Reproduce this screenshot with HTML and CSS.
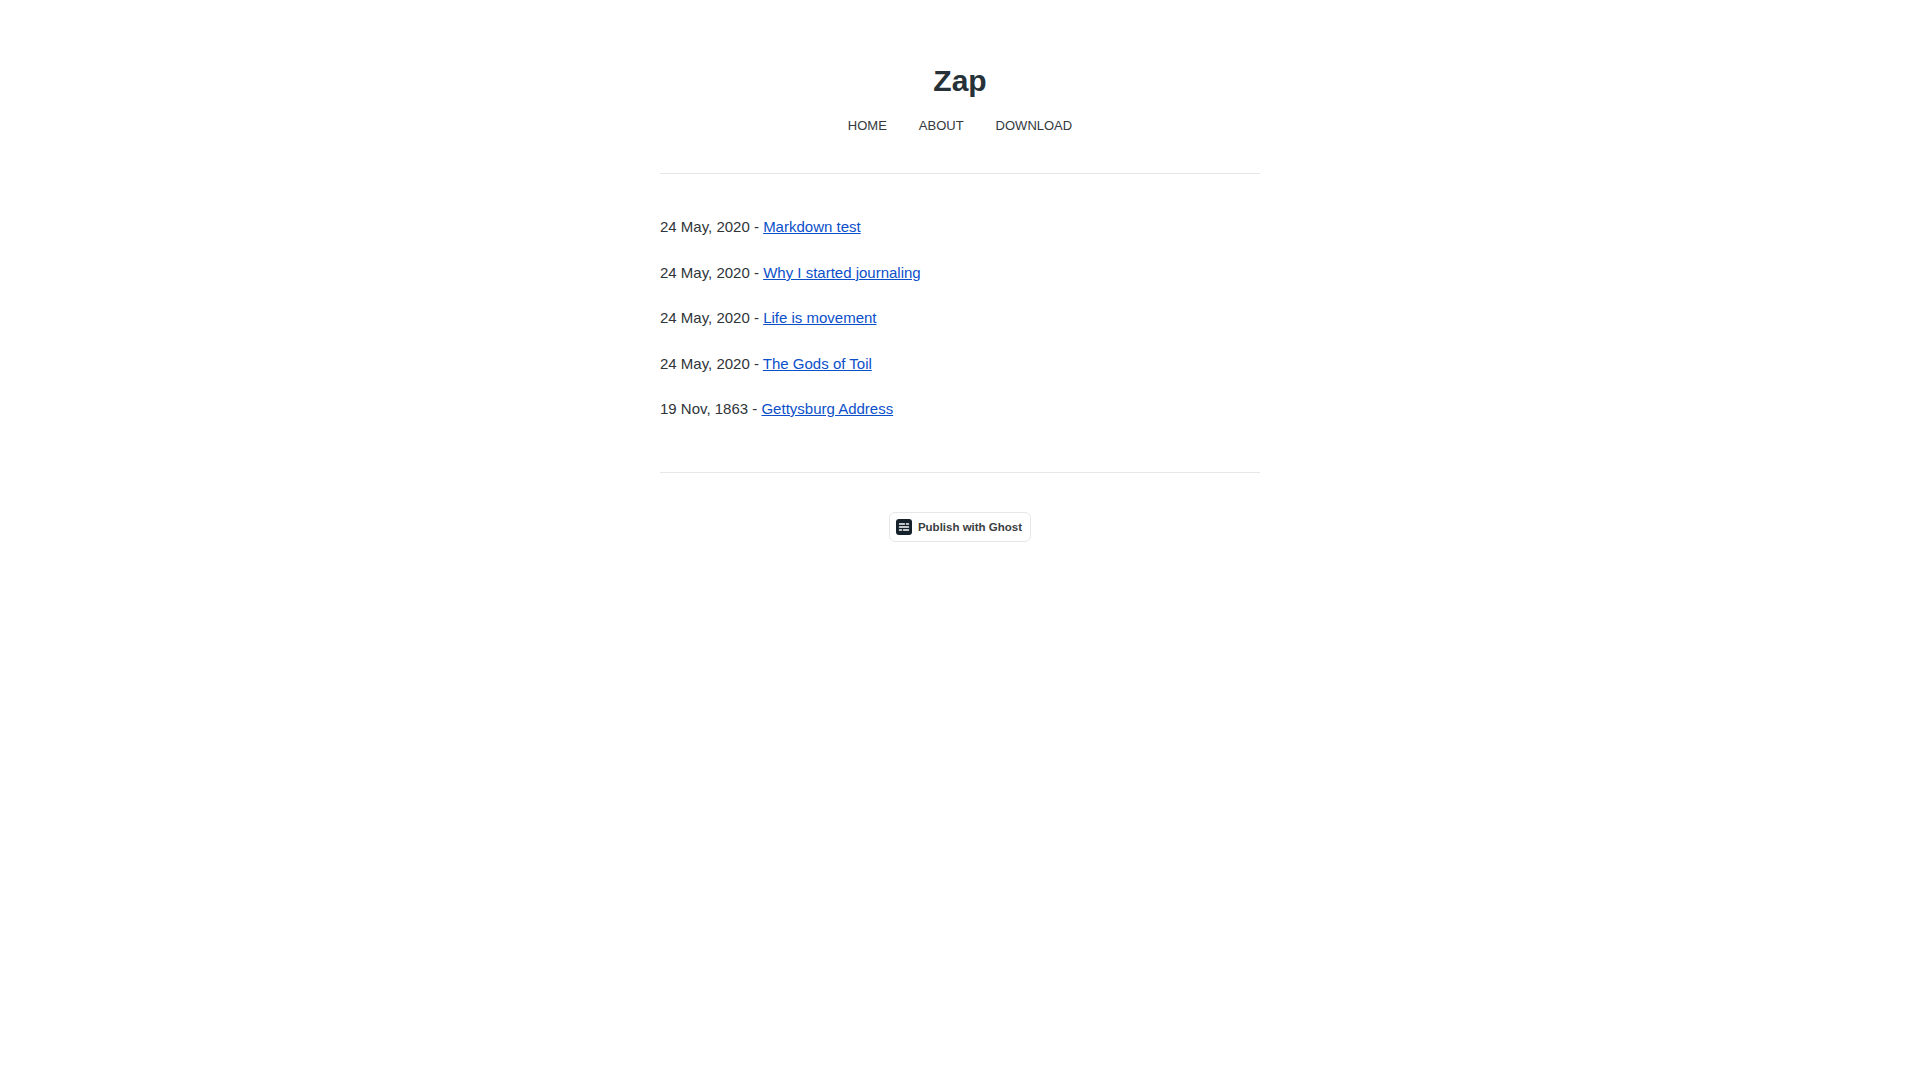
FILE: index.html
```html
<!DOCTYPE html>
<html lang="en">
<head>
    <meta charset="UTF-8">
    <title>Zap</title>
    <link rel="stylesheet" href="styles.css">
</head>
<body>
    <div class="main">
        <header class="site-head">
            <h1 class="site-title">Zap</h1>
            <ul class="site-nav">
                <li><a href="#">HOME</a></li>
                <li><a href="#">ABOUT</a></li>
                <li><a href="#">DOWNLOAD</a></li>
            </ul>
        </header>
        <ul class="post-list">
            <li>24 May, 2020 - <a href="#">Markdown test</a></li>
            <li>24 May, 2020 - <a href="#">Why I started journaling</a></li>
            <li>24 May, 2020 - <a href="#">Life is movement</a></li>
            <li>24 May, 2020 - <a href="#">The Gods of Toil</a></li>
            <li>19 Nov, 1863 - <a href="#">Gettysburg Address</a></li>
        </ul>
        <footer class="site-foot">
            <a class="ghost-badge" href="#">
                <svg class="ghost-icon" viewBox="0 0 16 16">
                    <rect width="16" height="16" rx="3" fill="#15212a"/>
                    <path d="M3.5 5h5M10.5 5h2M3.5 8h9M3.5 11h2M7.5 11h5" stroke="#fff" stroke-width="1.4" stroke-linecap="round" fill="none"/>
                </svg>
                Publish with Ghost
            </a>
        </footer>
    </div>
</body>
</html>
```
FILE: styles.css
```css
*{
    padding:0;
    margin:0;
    box-sizing:border-box;
}
body{
    background:#fff;
    color:#2f3539;
    font-family:"Liberation Sans",Arial,sans-serif;
    font-size:15px;
    line-height:1.5;
}
.main{
    width:600px;
    margin:0 auto;
}
.site-head{
    padding-top:60px;
    padding-bottom:36px;
    text-align:center;
    border-bottom:1px solid #e5e7e8;
}
.site-title{
    font-size:30px;
    line-height:42px;
    font-weight:700;
    color:#263238;
}
.site-nav{
    list-style:none;
    display:flex;
    justify-content:center;
    gap:32px;
    margin-top:12px;
}
.site-nav a{
    font-size:13px;
    line-height:20px;
    color:#33393d;
    text-decoration:none;
}
.post-list{
    list-style:none;
    padding:41.5px 0 51.5px;
    border-bottom:1px solid #e5e7e8;
}
.post-list li{
    line-height:23px;
    margin-bottom:22.5px;
}
.post-list li:last-child{
    margin-bottom:0;
}
.post-list a{
    color:#0b4fc9;
}
.site-foot{
    display:flex;
    justify-content:center;
    padding-top:39px;
}
.ghost-badge{
    display:flex;
    align-items:center;
    gap:6px;
    height:30px;
    padding:0 8px 0 6px;
    border:1px solid #e6e7e8;
    border-radius:6px;
    font-size:11.5px;
    line-height:18px;
    font-weight:700;
    color:#3a3e42;
    text-decoration:none;
}
.ghost-icon{
    width:16px;
    height:16px;
}
```
